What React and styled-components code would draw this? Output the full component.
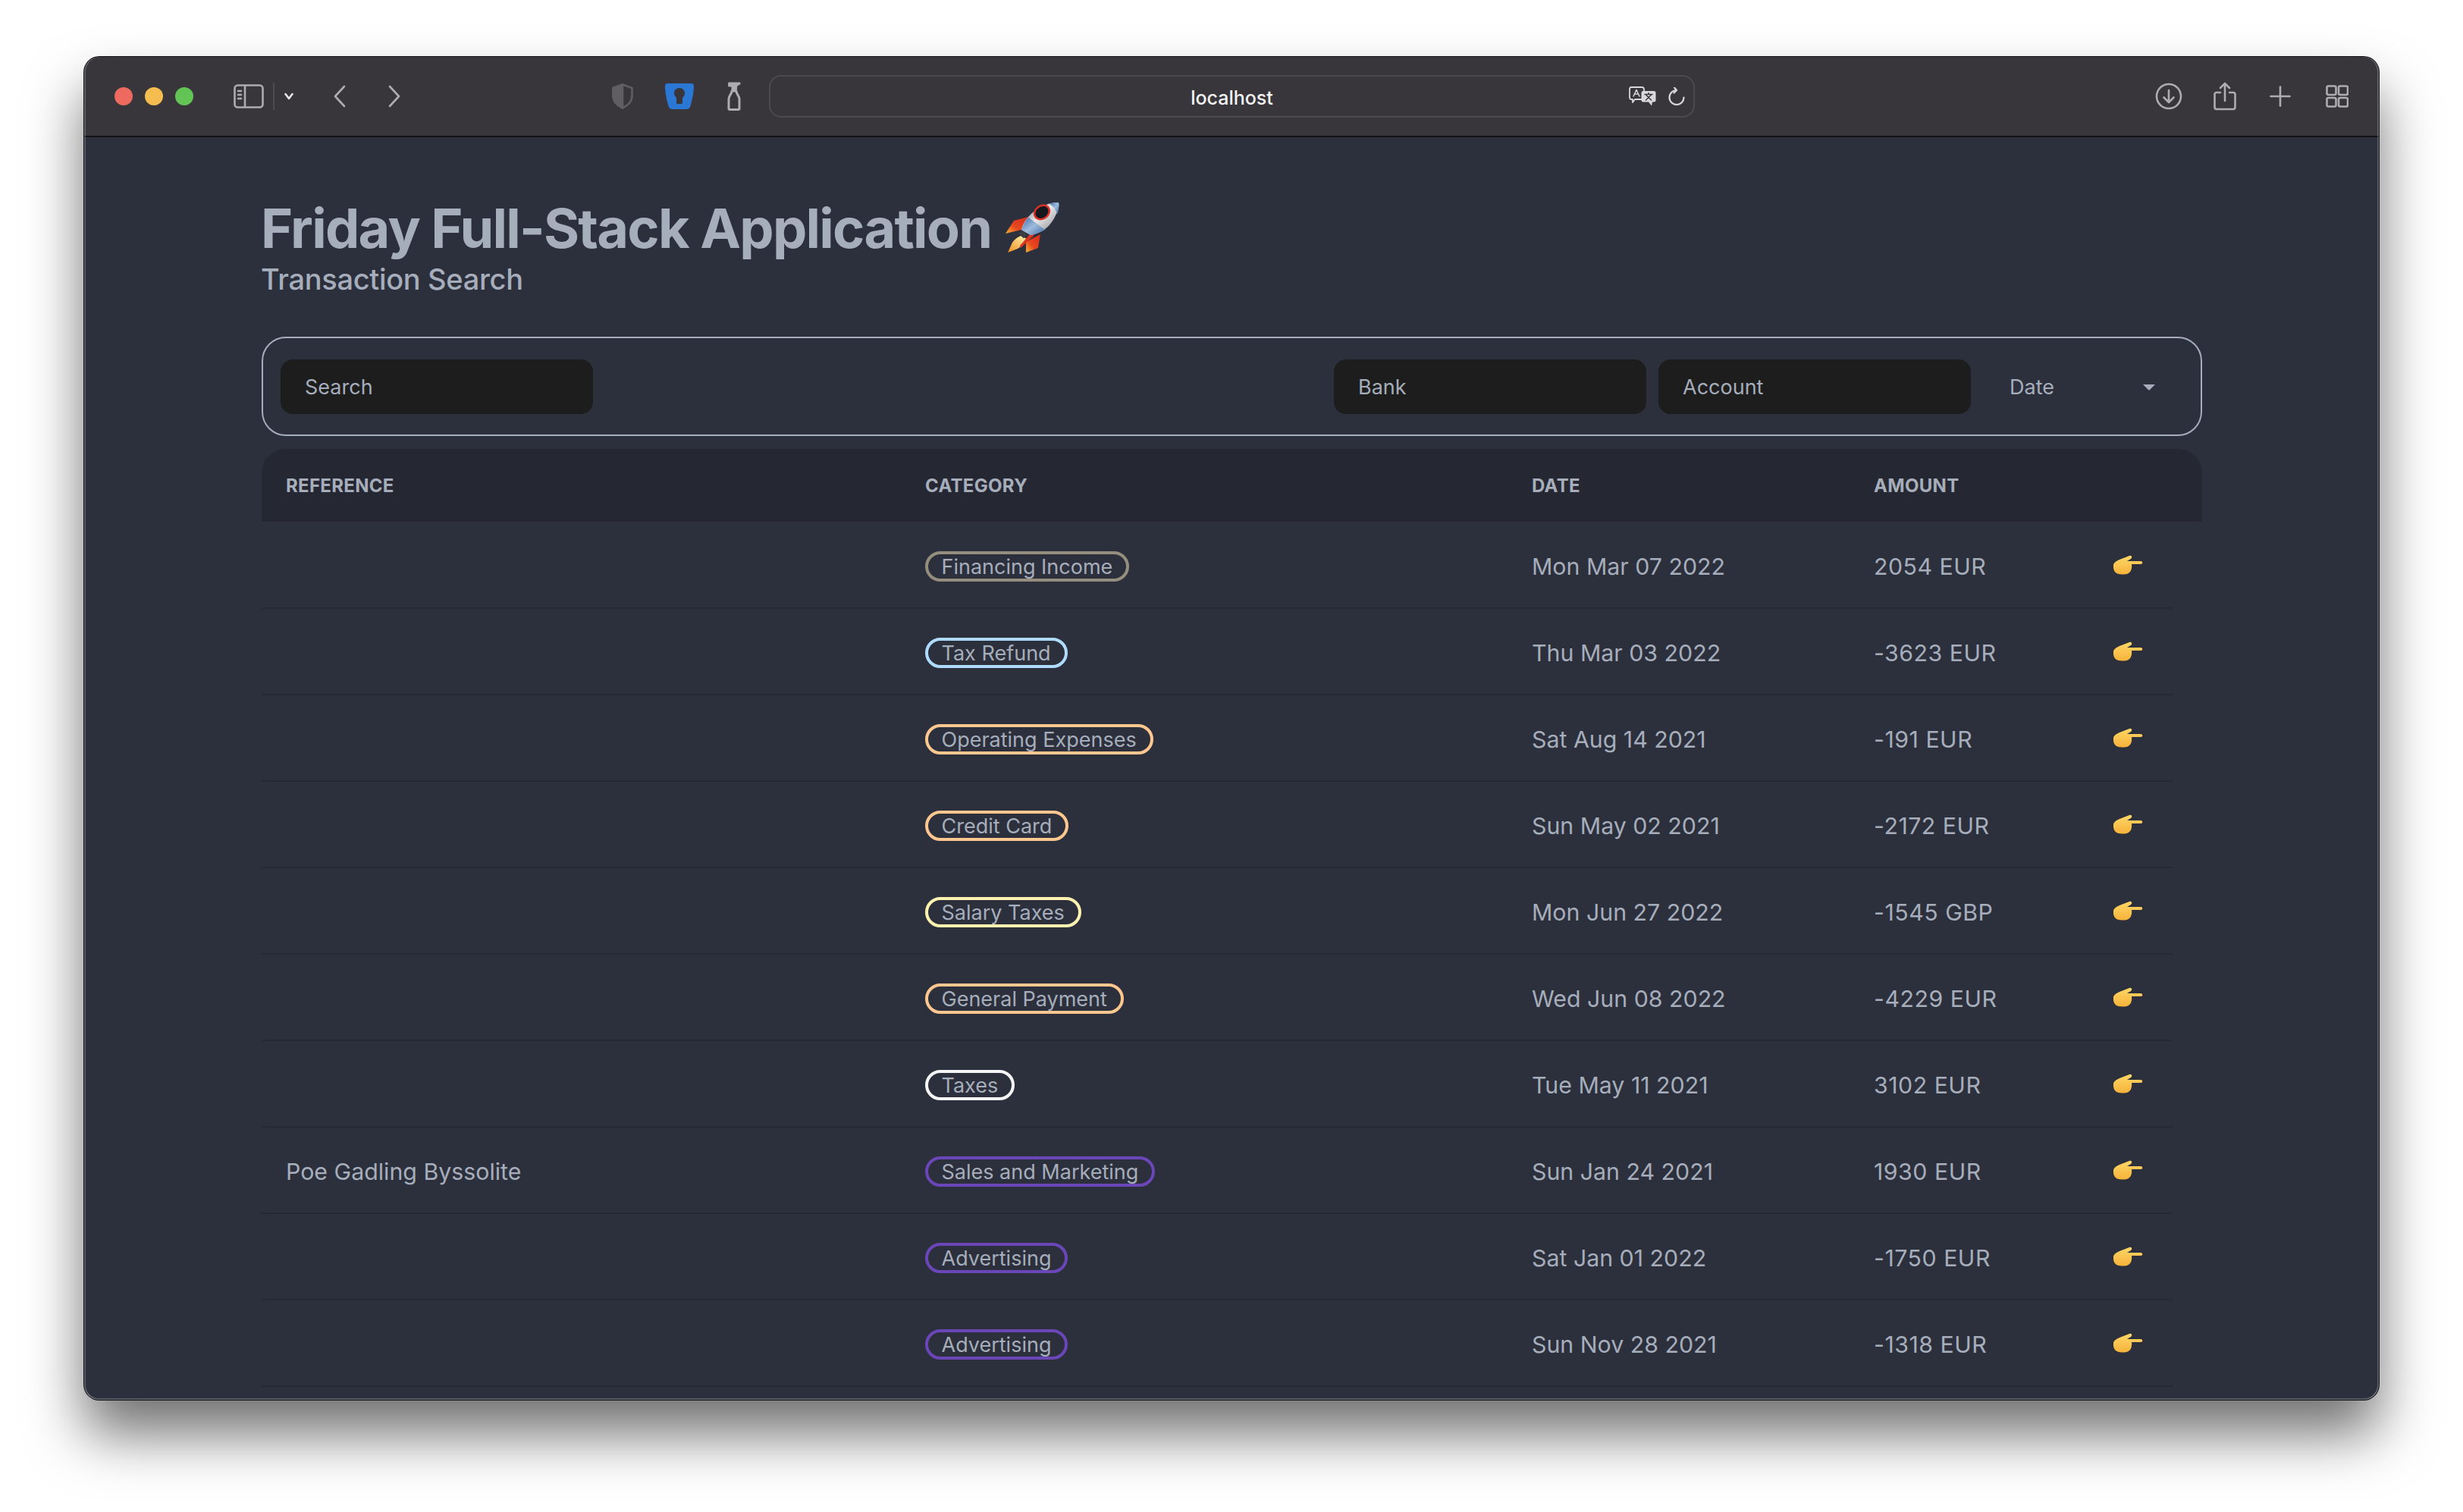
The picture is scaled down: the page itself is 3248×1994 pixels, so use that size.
import styled, { createGlobalStyle } from "styled-components";

const GlobalStyle = createGlobalStyle`
  html, body {
    margin: 0;
    padding: 0;
    background: #ffffff;
    font-family: "Inter", "Liberation Sans", sans-serif;
  }
`;

const Page = styled.div`
  width: 3248px;
  height: 1994px;
  padding: 75px 111px 0;
  box-sizing: border-box;
  overflow: hidden;
`;

const Window = styled.div`
  position: relative;
  width: 3026px;
  height: 1771px;
  box-sizing: border-box;
  border-radius: 20px;
  overflow: hidden;
  background: #2c303c;
  box-shadow: 0 0 0 1px #141416, 0 45px 75px rgba(0, 0, 0, 0.56);

  &::after {
    content: "";
    position: absolute;
    inset: 0;
    border-radius: 20px;
    pointer-events: none;
    box-shadow: inset 2px 0 0 rgba(255, 255, 255, 0.2), inset -2px 0 0 rgba(255, 255, 255, 0.2),
      inset 0 -2px 0 rgba(255, 255, 255, 0.2);
  }
`;

const TitleBar = styled.div`
  height: 106px;
  box-sizing: border-box;
  background: #38363b;
  border-bottom: 2px solid #131316;
  display: flex;
  align-items: center;
  padding-left: 40px;
`;

const Traffic = styled.div`
  display: flex;
  gap: 16px;
`;

const Light = styled.span`
  width: 24px;
  height: 24px;
  border-radius: 50%;
  background: ${(p) => p.$color};
`;

const ToolIcon = styled.svg`
  display: block;
  flex: none;
  margin-left: ${(p) => p.$left}px;
  fill: none;
  stroke: #aeacb1;
  stroke-width: 2.6;
  stroke-linecap: round;
  stroke-linejoin: round;
`;

const UrlBar = styled.div`
  flex: none;
  width: 1221px;
  height: 56px;
  margin-left: 37px;
  box-sizing: border-box;
  border: 2px solid #4c4a4f;
  border-radius: 16px;
  display: flex;
  align-items: center;
  justify-content: flex-end;
  position: relative;
  padding-right: 11px;
`;

const UrlText = styled.span`
  position: absolute;
  left: 0;
  right: 0;
  top: 13px;
  text-align: center;
  font-size: 25px;
  line-height: 30px;
  font-weight: 500;
  color: #f4f4f5;
`;

const Content = styled.main`
  padding: 77px 233px 0 234px;
`;

const Heading = styled.h1`
  margin: 0 0 0 -1px;
  display: flex;
  align-items: center;
  gap: 19px;
  height: 86px;
  font-size: 72px;
  line-height: 86px;
  font-weight: 700;
  letter-spacing: -1.75px;
  color: #a6adbb;
`;

const SubHeading = styled.h2`
  margin: 0 0 0 -1px;
  font-size: 38px;
  line-height: 49px;
  font-weight: 500;
  letter-spacing: -0.33px;
  color: #a6adbb;
`;

const FilterBox = styled.div`
  margin-top: 51px;
  height: 131px;
  box-sizing: border-box;
  border: 2px solid #a6adbb;
  border-radius: 32px;
  padding: 0 23px;
  display: flex;
  align-items: center;
  gap: 16px;
`;

const FilterInput = styled.div`
  width: 412px;
  height: 72px;
  box-sizing: border-box;
  border-radius: 16px;
  background: #1d1d1d;
  padding: 2px 32px 0;
  display: flex;
  align-items: center;
  font-size: 27px;
  color: #a6adbb;
  margin-left: ${(p) => (p.$push ? "auto" : "0")};
`;

const FilterSelect = styled.div`
  width: 264px;
  height: 72px;
  box-sizing: border-box;
  padding: 2px 36px 0 35px;
  display: flex;
  align-items: center;
  justify-content: space-between;
  font-size: 27px;
  color: #a6adbb;
`;

const Caret = styled.span`
  width: 0;
  height: 0;
  border-left: 8px solid transparent;
  border-right: 8px solid transparent;
  border-top: 8px solid #a6adbb;
  margin-right: 1px;
`;

const HeaderRow = styled.div`
  margin: 17px 0 1px;
  height: 96px;
  border-radius: 32px 32px 0 0;
  background: #252832;
  display: grid;
  grid-template-columns: 843px 800px 451px 1fr;
  align-items: center;
  font-size: 24px;
  font-weight: 700;
  letter-spacing: 0.3px;
  color: #a6adbb;
`;

const HeaderCell = styled.div`
  padding-left: 32px;
`;

const Row = styled.div`
  width: 2520px;
  height: 114px;
  box-sizing: border-box;
  padding-top: 4px;
  border-bottom: 2px solid #262933;
  display: grid;
  grid-template-columns: 843px 800px 451px 315px 1fr;
  align-items: center;
  font-size: 30.300px;
  color: #a6adbb;
`;

const Cell = styled.div`
  padding-left: 32px;
`;

const AmountCell = styled(Cell)`
  letter-spacing: 0.5px;
`;

const Pill = styled.span`
  display: inline-block;
  height: 40px;
  box-sizing: border-box;
  border: 4px solid ${(p) => p.$color};
  border-radius: 20px;
  padding: 0 18px 0 17.500px;
  font-size: 27px;
  line-height: 34px;
  color: #a6adbb;
`;

const HandIcon = styled.svg`
  display: block;
  margin-top: -4px;
`;

const rows = [
  { ref: "", cat: "Financing Income", color: "#958d7e", date: "Mon Mar 07 2022", amount: "2054 EUR" },
  { ref: "", cat: "Tax Refund", color: "#afdbff", date: "Thu Mar 03 2022", amount: "-3623 EUR" },
  { ref: "", cat: "Operating Expenses", color: "#fdc78f", date: "Sat Aug 14 2021", amount: "-191 EUR" },
  { ref: "", cat: "Credit Card", color: "#fdc78f", date: "Sun May 02 2021", amount: "-2172 EUR" },
  { ref: "", cat: "Salary Taxes", color: "#fff2b0", date: "Mon Jun 27 2022", amount: "-1545 GBP" },
  { ref: "", cat: "General Payment", color: "#fdc78f", date: "Wed Jun 08 2022", amount: "-4229 EUR" },
  { ref: "", cat: "Taxes", color: "#f5f5f5", date: "Tue May 11 2021", amount: "3102 EUR" },
  { ref: "Poe Gadling Byssolite", cat: "Sales and Marketing", color: "#6b46b8", date: "Sun Jan 24 2021", amount: "1930 EUR" },
  { ref: "", cat: "Advertising", color: "#6b46b8", date: "Sat Jan 01 2022", amount: "-1750 EUR" },
  { ref: "", cat: "Advertising", color: "#6b46b8", date: "Sun Nov 28 2021", amount: "-1318 EUR" },
];

function PointingHand() {
  return (
    <HandIcon width="40" height="26" viewBox="0 0 40 26">
      <defs>
        <linearGradient id="handFill" x1="0" y1="0" x2="0" y2="1">
          <stop offset="0" stopColor="#ffd766" />
          <stop offset="1" stopColor="#f6b23a" />
        </linearGradient>
      </defs>
      <path
        d="M1 14 C1 10 5 8 9 6 L22 1 C25 0 26.500 3 24 5 L19 8 L37 8 C40 8 40 12 37 12 L25 12 C25.500 15 25 20 23 22 C21 25 17 25.500 12 25.500 C5 25.500 0.500 22 1 14 Z"
        fill="url(#handFill)"
      />
    </HandIcon>
  );
}

function Rocket() {
  return (
    <svg width="72" height="72" viewBox="0 -2 72 72">
      <defs>
        <linearGradient id="rocketBody" x1="0.1" y1="0.1" x2="0.9" y2="0.9">
          <stop offset="0" stopColor="#70757c" />
          <stop offset="0.45" stopColor="#e9e9e9" />
          <stop offset="1" stopColor="#8b8f94" />
        </linearGradient>
        <linearGradient id="rocketBlue" x1="0" y1="0" x2="1" y2="1">
          <stop offset="0" stopColor="#3f6ea8" />
          <stop offset="0.5" stopColor="#9fbbdc" />
          <stop offset="1" stopColor="#3f6ea8" />
        </linearGradient>
        <linearGradient id="rocketFin" x1="1" y1="0" x2="0" y2="1">
          <stop offset="0" stopColor="#d82c1c" />
          <stop offset="0.6" stopColor="#e8481f" />
          <stop offset="1" stopColor="#f7b733" />
        </linearGradient>
        <linearGradient id="rocketFlame" x1="1" y1="0" x2="0" y2="1">
          <stop offset="0" stopColor="#fff6b0" />
          <stop offset="1" stopColor="#f08a1d" />
        </linearGradient>
      </defs>
      <path d="M30 19 L11 24 L0 41 L21 36 Z" fill="url(#rocketFin)" />
      <path d="M46 42 L43 60 L27 66 L27 52 Z" fill="url(#rocketFin)" />
      <path d="M20 44 C13 47 9 52 8 55 L3 66 L16 61 C21 58 25 53 28 48 Z" fill="url(#rocketFlame)" />
      <rect x="19" y="38" width="9" height="7" transform="rotate(45 23 41)" fill="#3a3d42" />
      <path d="M41 31 L37 44 L20 60 L19 57 Z" fill="#d8341f" />
      <path d="M21 36 C23 28 27 22 31 18 C38 10 50 3 60 1 C64 0 68 0 70 0 C71 4 70 9 67 15 C63 24 58 31 51 36 C46 39 40 42 33 43 Z" fill="url(#rocketBody)" />
      <path d="M30 19.500 C26 24 23 30 21 36 L33 43 C40 42 46 39 52 36 Z" fill="url(#rocketBlue)" />
      <path d="M58 1.500 C62 0.500 67 0 70 0 C71 5 70 10 68 16 C67 10 63 5 58 1.500 Z" fill="url(#rocketBlue)" />
      <ellipse cx="48" cy="13" rx="10.500" ry="8.500" transform="rotate(-35 48 13)" fill="#15181c" stroke="#d8322a" strokeWidth="2.500" />
    </svg>
  );
}

export default function App() {
  return (
    <>
      <GlobalStyle />
      <Page>
        <Window>
          <TitleBar>
            <Traffic>
              <Light $color="#ee6a5f" />
              <Light $color="#f5bd4f" />
              <Light $color="#61c454" />
            </Traffic>
            <ToolIcon $left={53} width="40" height="32" viewBox="0 0 40 32">
              <rect x="1.500" y="1.500" width="37" height="29" rx="4" />
              <path d="M15 2 V30 M6 9 H10 M6 14 H10 M6 19 H10" />
            </ToolIcon>
            <ToolIcon $left={12} width="2" height="36" viewBox="0 0 2 36">
              <path d="M1 0 V36" stroke="#56545a" strokeWidth="1.500" />
            </ToolIcon>
            <ToolIcon $left={13} width="12" height="10" viewBox="0 0 12 10">
              <path d="M1.500 2 L6 8 L10.500 2" stroke="#e6e6e6" />
            </ToolIcon>
            <ToolIcon $left={53} width="16" height="30" viewBox="0 0 16 30">
              <path d="M14 2 L2 15 L14 28" />
            </ToolIcon>
            <ToolIcon $left={56} width="16" height="30" viewBox="0 0 16 30">
              <path d="M2 2 L14 15 L2 28" />
            </ToolIcon>
            <ToolIcon $left={279} width="28" height="34" viewBox="0 0 28 34">
              <path d="M14 1.500 L26.500 6 V17 C26.500 24 21 29 14 32.500 C7 29 1.500 24 1.500 17 V6 Z" stroke="#5f5e63" />
              <path d="M14 1.500 L1.500 6 V17 C1.500 24 7 29 14 32.500 Z" fill="#5f5e63" stroke="#5f5e63" />
            </ToolIcon>
            <ToolIcon $left={42} width="38" height="34" viewBox="0 0 38 34">
              <path d="M3 0 H35 Q38 0 38 4 C38 12 35 26 33 31 Q32 34 28 34 H10 Q6 34 5 31 C3 26 0 12 0 4 Q0 0 3 0 Z" fill="#2a77d6" stroke="none" />
              <path d="M19 6 C23 6 26 9 26 13 C26 16 24 18 23 19 V26 Q23 27 22 27 H16 Q15 27 15 26 V19 C14 18 12 16 12 13 C12 9 15 6 19 6 Z" fill="#38363b" stroke="none" />
            </ToolIcon>
            <ToolIcon $left={44} width="18" height="38" viewBox="0 0 18 38">
              <path d="M6 12 C6 16 2 18 2 23 V35 Q2 36.500 3.500 36.500 H14.500 Q16 36.500 16 35 V23 C16 18 12 16 12 12 Z" strokeWidth="3" />
              <path d="M2 1 H12 L17 1 V3 L13 5 L12 12 H6 V6 H2 Z" fill="#aeacb1" strokeWidth="1" />
            </ToolIcon>
            <UrlBar>
              <UrlText>localhost</UrlText>
              <ToolIcon $left={0} width="36" height="26" viewBox="0 0 36 26">
                <path d="M3 1 H17 Q20 1 20 4 V14 Q20 17 17 17 H8 L5 21 V17 H3 Q1 17 1 14 V4 Q1 1 3 1 Z" strokeWidth="1.800" stroke="#d8d8da" />
                <path d="M19 6 H33 Q35.500 6 35.500 8.500 V18 Q35.500 20.500 33 20.500 H31 L30 25.500 L26 20.500 H19 Q16.500 20.500 16.500 18 V8.500 Q16.500 6 19 6 Z" fill="#d8d8da" stroke="none" />
                <path d="M21 10.500 H31 M26 8.500 V10.500 M22.500 18 L29.500 11 M22.500 11 L29.500 18" stroke="#38363b" strokeWidth="1.400" />
                <path d="M6 13 L10 4.500 L14 13 M7.500 10 H12.500" stroke="#d8d8da" strokeWidth="1.500" />
              </ToolIcon>
              <ToolIcon $left={16} width="22" height="24" viewBox="0 0 22 24">
                <path d="M11 4 A9.500 9.500 0 1 0 20.500 13.500 M11 4 L8 0.500 M11 4 L7.500 7.500" stroke="#d8d8da" strokeWidth="2.200" />
              </ToolIcon>
            </UrlBar>
            <ToolIcon $left={607} width="36" height="36" viewBox="0 0 36 36">
              <circle cx="18" cy="18" r="16" />
              <path d="M18 10 V26 M11.500 19.500 L18 26 L24.500 19.500" />
            </ToolIcon>
            <ToolIcon $left={41} width="30" height="38" viewBox="0 0 30 38">
              <path d="M9 14 H4 Q1.500 14 1.500 16.500 V33 Q1.500 36 4 36 H26 Q28.500 36 28.500 33 V16.500 Q28.500 14 26 14 H21" />
              <path d="M15 25 V2 M9 8 L15 2 L21 8" />
            </ToolIcon>
            <ToolIcon $left={44} width="28" height="28" viewBox="0 0 28 28">
              <path d="M14 1.500 V26.500 M1.500 14 H26.500" />
            </ToolIcon>
            <ToolIcon $left={46} width="30" height="30" viewBox="0 0 30 30">
              <rect x="1.500" y="1.500" width="12" height="11.500" rx="2" />
              <rect x="17" y="1.500" width="12" height="11.500" rx="2" />
              <rect x="1.500" y="17" width="12" height="11.500" rx="2" />
              <rect x="17" y="17" width="12" height="11.500" rx="2" />
            </ToolIcon>
          </TitleBar>
          <Content>
            <Heading>
              Friday Full-Stack Application
              <Rocket />
            </Heading>
            <SubHeading>Transaction Search</SubHeading>
            <FilterBox>
              <FilterInput>Search</FilterInput>
              <FilterInput $push>Bank</FilterInput>
              <FilterInput>Account</FilterInput>
              <FilterSelect>
                Date
                <Caret />
              </FilterSelect>
            </FilterBox>
            <HeaderRow>
              <HeaderCell>REFERENCE</HeaderCell>
              <HeaderCell>CATEGORY</HeaderCell>
              <HeaderCell>DATE</HeaderCell>
              <HeaderCell>AMOUNT</HeaderCell>
            </HeaderRow>
            {rows.map((row, i) => (
              <Row key={i}>
                <Cell>{row.ref}</Cell>
                <Cell>
                  <Pill $color={row.color}>{row.cat}</Pill>
                </Cell>
                <Cell>{row.date}</Cell>
                <AmountCell>{row.amount}</AmountCell>
                <Cell>
                  <PointingHand />
                </Cell>
              </Row>
            ))}
          </Content>
        </Window>
      </Page>
    </>
  );
}
